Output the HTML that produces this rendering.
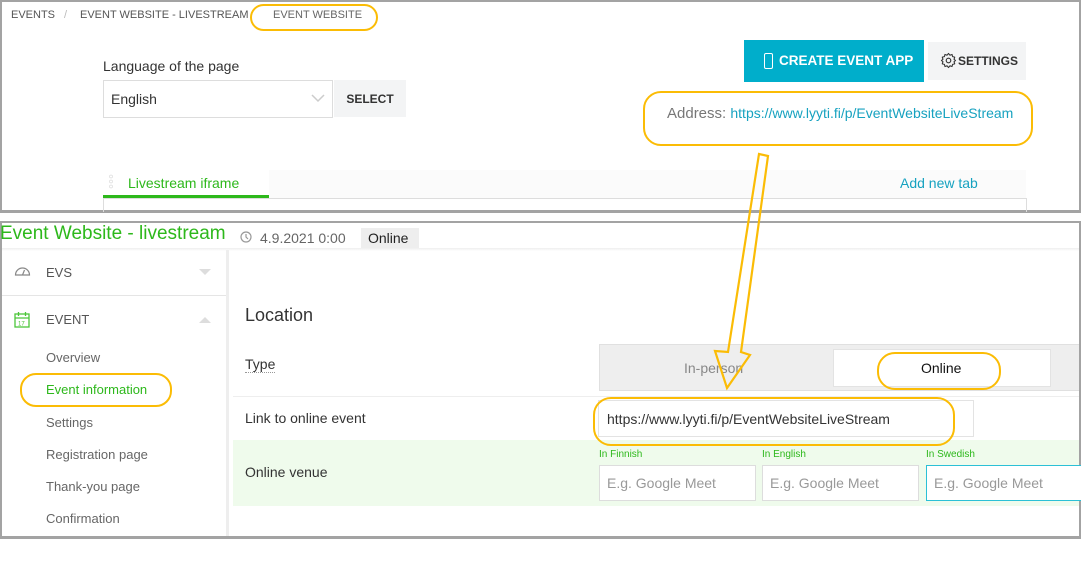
<!DOCTYPE html>
<html><head><meta charset="utf-8"><style>
*{box-sizing:border-box;margin:0;padding:0}
body{width:1081px;height:563px;background:#fff;font-family:"Liberation Sans","DejaVu Sans",sans-serif;position:relative;overflow:hidden;color:#444}
.a{position:absolute;white-space:nowrap}
.y{position:absolute;border:2.5px solid #fbbc05;border-radius:16px}
</style></head><body>
<!-- top panel -->
<div class="a" style="left:0;top:0;width:1081px;height:213px;border:2px solid #a3a3a3;border-bottom-width:3px"></div>
<div class="a" style="left:11px;top:9px;font-size:11px;color:#555">EVENTS</div>
<div class="a" style="left:64px;top:9px;font-size:11px;color:#bbb">/</div>
<div class="a" style="left:80px;top:9px;font-size:11px;color:#555">EVENT WEBSITE - LIVESTREAM</div>
<div class="a" style="left:273px;top:9px;font-size:11px;color:#666">EVENT WEBSITE</div>
<div class="a" style="left:103px;top:58px;font-size:14px;color:#333">Language of the page</div>
<div class="a" style="left:103px;top:80px;width:230px;height:38px;border:1px solid #ddd;font-size:14px;color:#333;padding:10px 7px">English</div>
<svg class="a" style="left:311px;top:94px" width="14" height="9"><path d="M1 1l6 6 6-6" fill="none" stroke="#ccc" stroke-width="1.5"/></svg>
<div class="a" style="left:334px;top:80px;width:72px;height:37px;background:#f3f4f5;font-size:12px;font-weight:bold;color:#333;padding:12px 0;text-align:center">SELECT</div>
<div class="a" style="left:744px;top:40px;width:180px;height:42px;background:#00aecb;color:#fff;font-size:13.5px;font-weight:bold;padding:13px 0 0 35px">CREATE EVENT APP</div>
<div class="a" style="left:764px;top:53px;width:9px;height:16px;border:1.5px solid #fff;border-radius:2px"></div>
<div class="a" style="left:928px;top:42px;width:98px;height:38px;background:#f3f4f5;font-size:12px;font-weight:bold;color:#333;padding:12px 0 0 30px">SETTINGS</div>
<svg class="a" style="left:940px;top:52px" width="17" height="17" viewBox="0 0 24 24"><circle cx="12" cy="12" r="3.2" fill="none" stroke="#333" stroke-width="1.6"/><path d="M12 2l2 2.5 3-1 .8 3 3 .8-1 3L22 12l-2.2 1.7 1 3-3 .8-.8 3-3-1L12 22l-2-2.5-3 1-.8-3-3-.8 1-3L2 12l2.2-1.7-1-3 3-.8.8-3 3 1z" fill="none" stroke="#333" stroke-width="1.5" stroke-linejoin="round"/></svg>
<div class="a" style="left:667px;top:105px;font-size:15px;color:#777">Address: <span style="color:#17a2c0;font-size:14px">https://www.lyyti.fi/p/EventWebsiteLiveStream</span></div>
<div class="a" style="left:103px;top:170px;width:923px;height:28px;background:#fbfbfb"></div>
<div class="a" style="left:103px;top:170px;width:166px;height:28px;background:#fff"></div>
<div class="a" style="left:109px;top:174px;width:4px;height:15px;background:radial-gradient(circle,#fff 1px,#ccc 1.5px,transparent 2px) 0 0/4px 5px"></div>
<div class="a" style="left:128px;top:175px;font-size:14px;color:#2db81b">Livestream iframe</div>
<div class="a" style="left:103px;top:195px;width:166px;height:3px;background:#2db81b"></div>
<div class="a" style="left:900px;top:175px;font-size:14px;color:#17a2c0">Add new tab</div>
<div class="a" style="left:103px;top:198px;width:924px;height:14px;border:1px solid #ddd;border-bottom:none"></div>
<!-- bottom panel -->
<div class="a" style="left:0;top:221px;width:1081px;height:318px;border:2px solid #a3a3a3;border-bottom-width:3px"></div>
<div class="a" style="left:0;top:223px;font-size:19px;color:#2db81b">Event Website - livestream</div>
<svg class="a" style="left:240px;top:231px" width="12" height="12"><circle cx="6" cy="6" r="5" fill="none" stroke="#999" stroke-width="1.2"/><path d="M6 3v3l2 2" fill="none" stroke="#999" stroke-width="1.2"/></svg>
<div class="a" style="left:260px;top:230px;font-size:14px;color:#666">4.9.2021 0:00</div>
<div class="a" style="left:361px;top:228px;width:58px;height:20px;background:#eee;font-size:14px;color:#222;padding:2px 0 0 7px">Online</div>
<div class="a" style="left:2px;top:248px;width:1077px;height:3px;background:linear-gradient(#eee,#fff)"></div>
<div class="a" style="left:226px;top:250px;width:3px;height:286px;background:#eee"></div>
<div class="a" style="left:2px;top:295px;width:224px;height:1px;background:#e5e5e5"></div>
<svg class="a" style="left:14px;top:264px" width="17" height="13" viewBox="0 0 17 13"><path d="M1.5 11a7 7 0 1 1 14 0z" fill="none" stroke="#888" stroke-width="1.2"/><path d="M8.5 11l2-5" stroke="#888" stroke-width="1.2"/></svg>
<div class="a" style="left:46px;top:265px;font-size:13px;color:#555">EVS</div>
<div class="a" style="left:199px;top:269px;border:6px solid transparent;border-top:6px solid #ddd"></div>
<svg class="a" style="left:14px;top:311px" width="16" height="17"><rect x="1" y="3" width="14" height="13" fill="none" stroke="#4cc53a" stroke-width="1.3"/><path d="M1 7h14M4.5 1v4M11.5 1v4" stroke="#4cc53a" stroke-width="1.3"/><text x="4" y="14.5" font-size="6" fill="#4cc53a">17</text></svg>
<div class="a" style="left:46px;top:312px;font-size:13px;color:#555">EVENT</div>
<div class="a" style="left:199px;top:311px;border:6px solid transparent;border-bottom:6px solid #ddd"></div>
<div class="a" style="left:46px;top:350px;font-size:13px;color:#666">Overview</div>
<div class="a" style="left:46px;top:382px;font-size:13px;color:#2db81b">Event information</div>
<div class="a" style="left:46px;top:415px;font-size:13px;color:#666">Settings</div>
<div class="a" style="left:46px;top:447px;font-size:13px;color:#666">Registration page</div>
<div class="a" style="left:46px;top:479px;font-size:13px;color:#666">Thank-you page</div>
<div class="a" style="left:46px;top:511px;font-size:13px;color:#666">Confirmation</div>
<div class="a" style="left:245px;top:305px;font-size:18px;color:#333">Location</div>
<div class="a" style="left:245px;top:356px;font-size:14px;color:#333;border-bottom:1px dotted #999">Type</div>
<div class="a" style="left:233px;top:396px;width:846px;height:1px;background:#eee"></div>
<div class="a" style="left:599px;top:344px;width:480px;height:47px;background:#eee;border:1px solid #e0e0e0;border-right:none"></div>
<div class="a" style="left:684px;top:360px;font-size:14px;color:#888">In-person</div>
<div class="a" style="left:833px;top:349px;width:218px;height:38px;background:#fff;border:1px solid #e3e3e3"></div>
<div class="a" style="left:921px;top:360px;font-size:14px;color:#111">Online</div>
<div class="a" style="left:245px;top:410px;font-size:14px;color:#333">Link to online event</div>
<div class="a" style="left:598px;top:400px;width:376px;height:37px;border:1px solid #e3e3e3"></div>
<div class="a" style="left:607px;top:411px;font-size:14px;color:#333">https://www.lyyti.fi/p/EventWebsiteLiveStream</div>
<div class="a" style="left:233px;top:440px;width:846px;height:66px;background:#effbec"></div>
<div class="a" style="left:245px;top:464px;font-size:14px;color:#333">Online venue</div>
<div class="a" style="left:599px;top:449px;font-size:10px;color:#2db81b">In Finnish</div>
<div class="a" style="left:762px;top:449px;font-size:10px;color:#2db81b">In English</div>
<div class="a" style="left:926px;top:449px;font-size:10px;color:#2db81b">In Swedish</div>
<div class="a" style="left:599px;top:465px;width:157px;height:36px;background:#fff;border:1px solid #ddd;font-size:14px;color:#999;padding:9px 7px">E.g. Google Meet</div>
<div class="a" style="left:762px;top:465px;width:157px;height:36px;background:#fff;border:1px solid #ddd;font-size:14px;color:#999;padding:9px 7px">E.g. Google Meet</div>
<div class="a" style="left:926px;top:465px;width:155px;height:36px;background:#fff;border:1px solid #2bc0d6;border-right:none;font-size:14px;color:#999;padding:9px 7px">E.g. Google Meet</div>
<!-- highlights on top -->
<div class="y" style="left:250px;top:4px;width:128px;height:27px"></div>
<div class="y" style="left:643px;top:91px;width:390px;height:55px;border-radius:18px"></div>
<div class="y" style="left:20px;top:373px;width:152px;height:34px"></div>
<div class="y" style="left:877px;top:352px;width:124px;height:38px;border-radius:18px"></div>
<div class="y" style="left:593px;top:397px;width:362px;height:49px;border-radius:18px"></div>
<svg class="a" style="left:0;top:0" width="1081" height="563"><polygon points="759,154 768,156 741,352 750,355 727,388 715,351 728,352" fill="none" stroke="#fbbc05" stroke-width="2.2" stroke-linejoin="miter"/></svg>
</body></html>
